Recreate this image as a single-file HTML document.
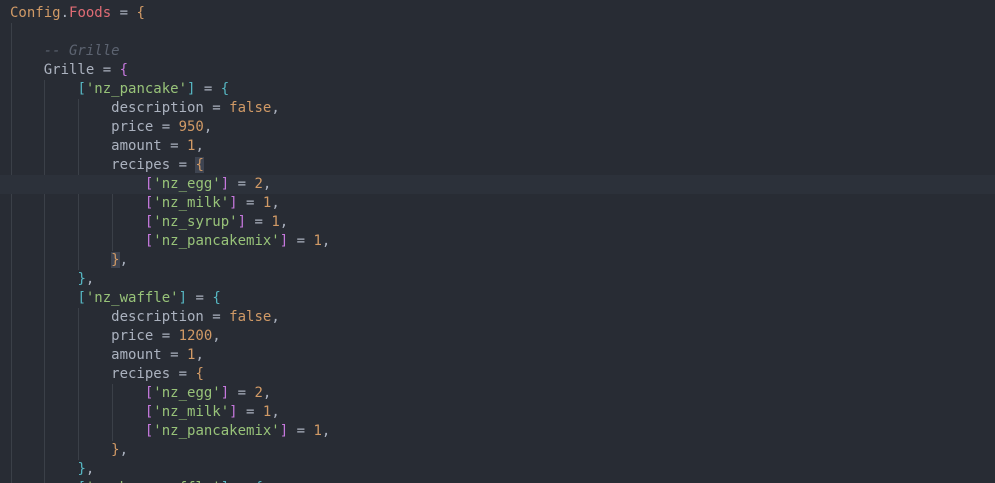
<!DOCTYPE html>
<html><head><meta charset="utf-8"><style>
html,body{margin:0;padding:0;background:#282c34;width:995px;height:483px;overflow:hidden}
#c{position:relative;padding-top:4px;font-family:"DejaVu Sans Mono","Liberation Mono",monospace;font-size:14px;line-height:19px;color:#abb2bf}
.l{height:19px;white-space:pre;padding-left:10px;position:relative}
.hl{background:#2c313a}
.g{position:absolute;width:1px;background:#3b4048}
.o{color:#d19a66}.r{color:#e06c75}.cm{color:#5c6370;font-style:italic}.s{color:#98c379}.c{color:#56b6c2}.m{color:#c678dd}
.bx{background:#3e4451}
</style></head><body><div id="c">
<div class="g" style="left:11px;top:23px;height:460px"></div>
<div class="g" style="left:44px;top:80px;height:403px"></div>
<div class="g" style="left:78px;top:99px;height:171px"></div>
<div class="g" style="left:112px;top:175px;height:76px"></div>
<div class="g" style="left:78px;top:308px;height:152px"></div>
<div class="g" style="left:112px;top:384px;height:57px"></div>
<div class="l"><span class="o">Config</span>.<span class="r">Foods</span> = <span class="o">{</span></div>
<div class="l"> </div>
<div class="l">    <span class="cm">-- Grille</span></div>
<div class="l">    Grille = <span class="m">{</span></div>
<div class="l">        <span class="c">[</span><span class="s">'nz_pancake'</span><span class="c">]</span> = <span class="c">{</span></div>
<div class="l">            description = <span class="o">false</span>,</div>
<div class="l">            price = <span class="o">950</span>,</div>
<div class="l">            amount = <span class="o">1</span>,</div>
<div class="l">            recipes = <span class="o bx">{</span></div>
<div class="l hl">                <span class="m">[</span><span class="s">'nz_egg'</span><span class="m">]</span> = <span class="o">2</span>,</div>
<div class="l">                <span class="m">[</span><span class="s">'nz_milk'</span><span class="m">]</span> = <span class="o">1</span>,</div>
<div class="l">                <span class="m">[</span><span class="s">'nz_syrup'</span><span class="m">]</span> = <span class="o">1</span>,</div>
<div class="l">                <span class="m">[</span><span class="s">'nz_pancakemix'</span><span class="m">]</span> = <span class="o">1</span>,</div>
<div class="l">            <span class="o bx">}</span>,</div>
<div class="l">        <span class="c">}</span>,</div>
<div class="l">        <span class="c">[</span><span class="s">'nz_waffle'</span><span class="c">]</span> = <span class="c">{</span></div>
<div class="l">            description = <span class="o">false</span>,</div>
<div class="l">            price = <span class="o">1200</span>,</div>
<div class="l">            amount = <span class="o">1</span>,</div>
<div class="l">            recipes = <span class="o">{</span></div>
<div class="l">                <span class="m">[</span><span class="s">'nz_egg'</span><span class="m">]</span> = <span class="o">2</span>,</div>
<div class="l">                <span class="m">[</span><span class="s">'nz_milk'</span><span class="m">]</span> = <span class="o">1</span>,</div>
<div class="l">                <span class="m">[</span><span class="s">'nz_pancakemix'</span><span class="m">]</span> = <span class="o">1</span>,</div>
<div class="l">            <span class="o">}</span>,</div>
<div class="l">        <span class="c">}</span>,</div>
<div class="l">        <span class="c">[</span><span class="s">'nz_berrywaffle'</span><span class="c">]</span> = <span class="c">{</span></div>
</div></body></html>
